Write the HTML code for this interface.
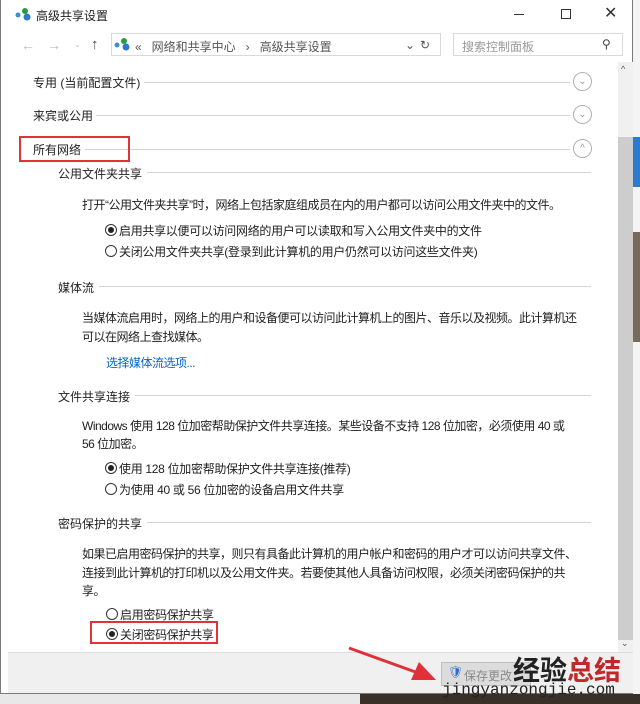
<!DOCTYPE html>
<html><head><meta charset="utf-8"><style>
*{margin:0;padding:0;box-sizing:border-box}
body{width:640px;height:704px;background:#e8e8e8;position:relative;overflow:hidden;font-family:"Liberation Sans","Noto Sans CJK SC",sans-serif;font-size:12px;color:#1e1e1e}
.win{position:absolute;left:0;top:0;width:633px;height:694px;background:#fff;border:1px solid #7a7a7a;border-top:none}
.a{position:absolute;white-space:nowrap}
.p{letter-spacing:-0.5px}
.r{letter-spacing:-0.3px}
.line{position:absolute;height:1px;background:#d4d4d4}
.circ{position:absolute;width:19px;height:19px;border:1px solid #b0b0b0;border-radius:50%;color:#999;font-size:10px;text-align:center;line-height:17px}
.rad{position:absolute;width:12px;height:12px;border:1px solid #333;border-radius:50%;background:#fff}
.rad.on::after{content:"";position:absolute;left:2px;top:2px;width:6px;height:6px;border-radius:50%;background:#222}
.red{position:absolute;border:2px solid #e0323a}
</style></head><body>
<div style="position:absolute;left:633px;top:0;width:7px;height:704px;background:#f4f4f4"></div>
<div style="position:absolute;left:633px;top:137px;width:7px;height:50px;background:#2b7bd0"></div>
<div style="position:absolute;left:633px;top:232px;width:7px;height:110px;background:#7a6a5a"></div>
<div style="position:absolute;left:360px;top:694px;width:280px;height:10px;background:#3a3028"></div>
<div class="win">
<svg class="a" style="left:14px;top:7px" width="18" height="14"><circle cx="3" cy="8" r="2.5" fill="#3a8fd8"/><circle cx="10" cy="4" r="3" fill="#2a9a40"/><circle cx="12" cy="10" r="3.5" fill="#2a7ad0"/></svg>
<div class="a" style="left:35px;top:7px">高级共享设置</div>
<div class="a" style="left:513px;top:14px;width:10px;height:1px;background:#333"></div>
<div class="a" style="left:560px;top:9px;width:10px;height:10px;border:1px solid #333"></div>
<div class="a" style="left:603px;top:3px;font-size:16px;color:#333">✕</div>
<div class="a" style="left:20px;top:37px;color:#bbb;font-size:14px">←</div>
<div class="a" style="left:46px;top:37px;color:#bbb;font-size:14px">→</div>
<div class="a" style="left:73px;top:40px;color:#bbb;font-size:8px">⌄</div>
<div class="a" style="left:90px;top:36px;color:#444;font-size:15px">↑</div>
<div class="a" style="left:110px;top:33px;width:330px;height:23px;border:1px solid #d9d9d9"></div>
<svg class="a" style="left:113px;top:37px" width="18" height="14"><circle cx="3" cy="8" r="2.5" fill="#3a8fd8"/><circle cx="10" cy="4" r="3" fill="#2a9a40"/><circle cx="12" cy="10" r="3.5" fill="#2a7ad0"/></svg>
<div class="a" style="left:134px;top:38px;color:#555">«&nbsp;&nbsp;&nbsp;网络和共享中心&nbsp;&nbsp;&nbsp;›&nbsp;&nbsp;&nbsp;高级共享设置</div>
<div class="a" style="left:404px;top:38px;color:#555">⌄</div>
<div class="a" style="left:419px;top:38px;color:#555">↻</div>
<div class="a" style="left:452px;top:33px;width:170px;height:23px;border:1px solid #d9d9d9"></div>
<div class="a" style="left:461px;top:38px;color:#999">搜索控制面板</div>
<div class="a" style="left:601px;top:37px;color:#444">⚲</div>
<div class="a" style="left:617px;top:62px;width:15px;height:590px;background:#f0f0f0"></div>
<div class="a" style="left:617px;top:137px;width:15px;height:503px;background:#cdcdcd"></div>
<div class="a" style="left:620px;top:64px;font-size:9px;color:#555">^</div>
<div class="a" style="left:620px;top:638px;font-size:9px;color:#555">⌄</div>

<div class="a" style="left:32px;top:74px">专用 (当前配置文件)</div><div class="line" style="left:143px;top:82px;width:426px"></div><div class="circ" style="left:572px;top:72px">⌄</div>
<div class="a" style="left:32px;top:107px">来宾或公用</div><div class="line" style="left:95px;top:115px;width:474px"></div><div class="circ" style="left:572px;top:105px">⌄</div>
<div class="a" style="left:32px;top:141px">所有网络</div><div class="line" style="left:84px;top:149px;width:485px"></div><div class="circ" style="left:572px;top:139px">^</div>
<div class="red" style="left:18px;top:136px;width:111px;height:26px"></div>
<div class="a" style="left:57px;top:165px">公用文件夹共享</div><div class="line" style="left:146px;top:172px;width:444px"></div>
<div class="a p" style="left:81px;top:196px">打开“公用文件夹共享”时，网络上包括家庭组成员在内的用户都可以访问公用文件夹中的文件。</div>
<div class="rad on" style="left:104px;top:224px"></div><div class="a r" style="left:118px;top:222px">启用共享以便可以访问网络的用户可以读取和写入公用文件夹中的文件</div>
<div class="rad" style="left:104px;top:245px"></div><div class="a r" style="left:118px;top:243px">关闭公用文件夹共享(登录到此计算机的用户仍然可以访问这些文件夹)</div>
<div class="a" style="left:57px;top:279px">媒体流</div><div class="line" style="left:98px;top:286px;width:492px"></div>
<div class="a p" style="left:81px;top:309px">当媒体流启用时，网络上的用户和设备便可以访问此计算机上的图片、音乐以及视频。此计算机还</div>
<div class="a p" style="left:81px;top:328px">可以在网络上查找媒体。</div>
<div class="a p" style="left:105px;top:354px;color:#0066cc">选择媒体流选项...</div>
<div class="a" style="left:57px;top:388px">文件共享连接</div><div class="line" style="left:134px;top:395px;width:456px"></div>
<div class="a p" style="left:81px;top:417px">Windows 使用 128 位加密帮助保护文件共享连接。某些设备不支持 128 位加密，必须使用 40 或</div>
<div class="a p" style="left:81px;top:435px">56 位加密。</div>
<div class="rad on" style="left:104px;top:462px"></div><div class="a r" style="left:118px;top:460px">使用 128 位加密帮助保护文件共享连接(推荐)</div>
<div class="rad" style="left:104px;top:483px"></div><div class="a r" style="left:118px;top:481px">为使用 40 或 56 位加密的设备启用文件共享</div>
<div class="a" style="left:57px;top:515px">密码保护的共享</div><div class="line" style="left:146px;top:522px;width:444px"></div>
<div class="a p" style="left:81px;top:545px">如果已启用密码保护的共享，则只有具备此计算机的用户帐户和密码的用户才可以访问共享文件、</div>
<div class="a p" style="left:81px;top:564px">连接到此计算机的打印机以及公用文件夹。若要使其他人具备访问权限，必须关闭密码保护的共</div>
<div class="a p" style="left:81px;top:582px">享。</div>
<div class="rad" style="left:105px;top:608px"></div><div class="a r" style="left:119px;top:606px">启用密码保护共享</div>
<div class="rad on" style="left:105px;top:628px"></div><div class="a r" style="left:119px;top:626px">关闭密码保护共享</div>
<div class="red" style="left:89px;top:621px;width:128px;height:23px"></div>
<div class="a" style="left:7px;top:652px;width:625px;height:41px;background:#f0f0f0;border-top:1px solid #dcdcdc"></div>
<div class="a" style="left:440px;top:662px;width:90px;height:24px;background:#dcdcdc;border:1px solid #c0c0c0"></div>
<div class="a" style="left:447px;top:665px;color:#2a6fd0">🛡</div>
<div class="a" style="left:463px;top:667px;color:#888">保存更改</div>
<svg class="a" style="left:340px;top:640px" width="100" height="45"><line x1="8" y1="8" x2="80" y2="34" stroke="#e0303a" stroke-width="3"/><polygon points="95,40 70,40 78,22" fill="#e0303a"/></svg>
<div class="a" style="left:512px;top:649px;font-size:27px;font-weight:bold;color:#222">经验<span style="color:#c0282a">总结</span></div>
<div class="a" style="left:441px;top:681px;font-size:16px;font-family:'Liberation Mono',monospace;color:#222">jingyanzongjie.com</div>
</div>
</body></html>
